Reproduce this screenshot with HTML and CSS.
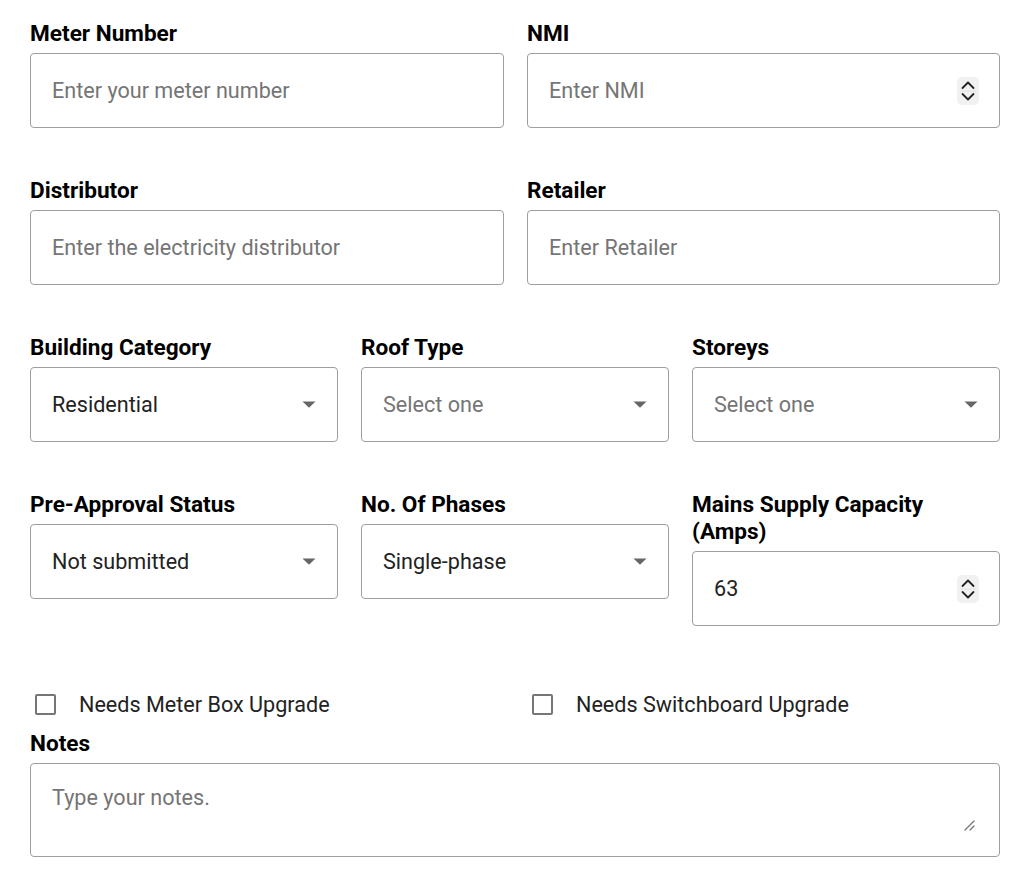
FILE: index.html
```html
<!DOCTYPE html>
<html>
<head>
<meta charset="utf-8">
<link rel="stylesheet" href="styles.css">
</head>
<body>
<form class="form">
  <div class="row two">
    <div class="field">
      <label class="label">Meter Number</label>
      <div class="control"><span class="ph">Enter your meter number</span></div>
    </div>
    <div class="field">
      <label class="label">NMI</label>
      <div class="control"><span class="ph">Enter NMI</span>
        <svg class="spin" width="22" height="28" viewBox="0 0 22 28"><rect x="0" y="0" width="22" height="28" rx="5" fill="#f1f1f1"/><line x1="3" y1="14" x2="19" y2="14" stroke="#e2e2e2" stroke-width="1"/><path d="M5.5 11 L11 5.5 L16.5 11" fill="none" stroke="#222" stroke-width="1.8" stroke-linecap="round" stroke-linejoin="round"/><path d="M5.5 17 L11 22.5 L16.5 17" fill="none" stroke="#222" stroke-width="1.8" stroke-linecap="round" stroke-linejoin="round"/></svg>
      </div>
    </div>
  </div>
  <div class="row two">
    <div class="field">
      <label class="label">Distributor</label>
      <div class="control"><span class="ph">Enter the electricity distributor</span></div>
    </div>
    <div class="field">
      <label class="label">Retailer</label>
      <div class="control"><span class="ph">Enter Retailer</span></div>
    </div>
  </div>
  <div class="row three">
    <div class="field">
      <label class="label">Building Category</label>
      <div class="control"><span class="val">Residential</span>
        <svg class="caret" width="14" height="7" viewBox="0 0 14 7"><path d="M0.5 0.5 L13.5 0.5 L7 6.8 Z" fill="#666"/></svg></div>
    </div>
    <div class="field">
      <label class="label">Roof Type</label>
      <div class="control"><span class="ph">Select one</span>
        <svg class="caret" width="14" height="7" viewBox="0 0 14 7"><path d="M0.5 0.5 L13.5 0.5 L7 6.8 Z" fill="#666"/></svg></div>
    </div>
    <div class="field">
      <label class="label">Storeys</label>
      <div class="control"><span class="ph">Select one</span>
        <svg class="caret" width="14" height="7" viewBox="0 0 14 7"><path d="M0.5 0.5 L13.5 0.5 L7 6.8 Z" fill="#666"/></svg></div>
    </div>
  </div>
  <div class="row three">
    <div class="field">
      <label class="label">Pre-Approval Status</label>
      <div class="control"><span class="val">Not submitted</span>
        <svg class="caret" width="14" height="7" viewBox="0 0 14 7"><path d="M0.5 0.5 L13.5 0.5 L7 6.8 Z" fill="#666"/></svg></div>
    </div>
    <div class="field">
      <label class="label">No. Of Phases</label>
      <div class="control"><span class="val">Single-phase</span>
        <svg class="caret" width="14" height="7" viewBox="0 0 14 7"><path d="M0.5 0.5 L13.5 0.5 L7 6.8 Z" fill="#666"/></svg></div>
    </div>
    <div class="field">
      <label class="label">Mains Supply Capacity<br>(Amps)</label>
      <div class="control"><span class="val">63</span>
        <svg class="spin" width="22" height="28" viewBox="0 0 22 28"><rect x="0" y="0" width="22" height="28" rx="5" fill="#f1f1f1"/><line x1="3" y1="14" x2="19" y2="14" stroke="#e2e2e2" stroke-width="1"/><path d="M5.5 11 L11 5.5 L16.5 11" fill="none" stroke="#222" stroke-width="1.8" stroke-linecap="round" stroke-linejoin="round"/><path d="M5.5 17 L11 22.5 L16.5 17" fill="none" stroke="#222" stroke-width="1.8" stroke-linecap="round" stroke-linejoin="round"/></svg>
      </div>
    </div>
  </div>
  <div class="row two checks">
    <label class="check"><span class="box"></span>Needs Meter Box Upgrade</label>
    <label class="check"><span class="box"></span>Needs Switchboard Upgrade</label>
  </div>
  <div class="field notes">
    <label class="label">Notes</label>
    <div class="control area"><span class="ph">Type your notes.</span>
      <svg class="grip" width="12" height="12" viewBox="0 0 12 12"><path d="M11 2 L2 11 M11 7 L7 11" stroke="#777" stroke-width="1.3" stroke-linecap="round"/></svg>
    </div>
  </div>
</form>
</body>
</html>
```
FILE: styles.css
```css
* { box-sizing: border-box; }
html, body { margin: 0; padding: 0; background: #fff; }
body { font-family: Roboto, "Noto Sans", sans-serif; color: #000; }
.form { width: 1000px; padding: 20px 0 0 30px; display: flex; flex-direction: column; }
.row { display: grid; column-gap: 23px; margin-bottom: 49px; align-items: start; }
.row.two { grid-template-columns: 474px 473px; }
.row.three { grid-template-columns: 308px 308px 308px; }
.field { display: flex; flex-direction: column; }
.label { font-size: 22.6px; font-weight: 700; line-height: 27px; margin-bottom: 6px; color: #000; }
.control {
  height: 75px; border: 1px solid #9e9e9e; border-radius: 4px;
  display: flex; align-items: center; justify-content: space-between;
  padding: 0 21px 0 21px; font-size: 21.6px;
}
.ph { color: #757575; }
.val { color: #222; }
.spin { margin-right: -1px; }
.row.checks { margin-top: 15px; margin-bottom: 12px; height: 28px; align-items: center; }
.check { display: flex; align-items: center; font-size: 21.6px; color: #222; padding-left: 5px; height: 28px; }
.box { width: 21px; height: 21px; border: 2px solid #767676; border-radius: 2px; margin-right: 23px; }
.notes { width: 970px; }
.control.area { height: 94px; align-items: flex-start; padding-top: 21px; position: relative; }
.grip { position: absolute; right: 24px; bottom: 25px; }
```
